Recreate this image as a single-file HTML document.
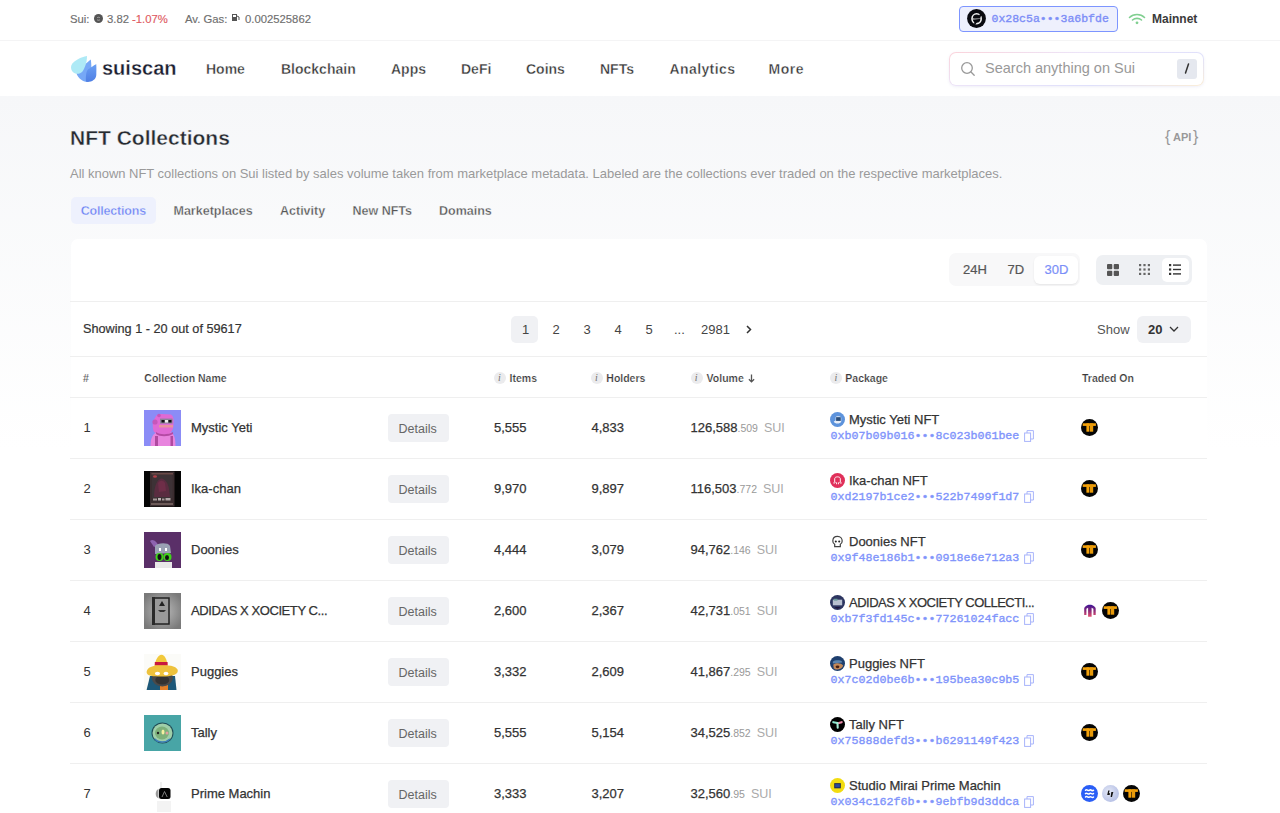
<!DOCTYPE html>
<html><head><meta charset="utf-8">
<style>
*{box-sizing:border-box;margin:0;padding:0}
html,body{width:1280px;height:813px;overflow:hidden;background:linear-gradient(to bottom,#f6f7f9 96px,#ffffff 450px);font-family:"Liberation Sans",sans-serif;color:#222}
.a{position:absolute}
.t{position:absolute;white-space:nowrap;line-height:1}
.nav{font-weight:bold;font-size:14px;color:#333;top:62px;-webkit-text-stroke:0.35px #fff}
.mono{font-family:"Liberation Mono",monospace}
.hl{position:absolute;left:70px;width:1137px;height:1px;background:#efefef}
.tab{font-weight:bold;font-size:12.5px;color:#555;top:205px;-webkit-text-stroke:0.3px #f8f9fa}
.th{font-weight:bold;font-size:10.5px;color:#3a3a3a;top:373px;-webkit-text-stroke:0.2px #fff}
.info{position:absolute;width:12px;height:12px;border-radius:6px;background:#ebebed;top:371.5px}
.info:after{content:"i";position:absolute;left:4px;top:1px;font-family:"Liberation Serif",serif;font-style:italic;font-size:10px;color:#707070;line-height:1}
.cell{font-size:13px;color:#333}
.nm{-webkit-text-stroke:0.25px #333}
.det{position:absolute;left:387.5px;width:61.5px;height:28.5px;background:#f0f1f4;border-radius:4px}
.det span{position:absolute;left:11px;top:9px;font-size:12.5px;color:#666;line-height:1}
.addr{font-family:"Liberation Mono",monospace;font-size:11.67px;color:#8094fb;-webkit-text-stroke:0.35px #8094fb}
.pg{font-size:13px;color:#444;top:323px}
</style></head><body>

<div class="a" style="left:0;top:0;width:1280px;height:40px;background:#fff"></div>
<div class="a" style="left:0;top:40px;width:1280px;height:1px;background:#f4f4f5"></div>
<div class="a" style="left:0;top:41px;width:1280px;height:55px;background:#fff"></div>
<div class="t" style="left:70px;top:13.7px;font-size:11.3px;color:#6f6f6f;-webkit-text-stroke:0.15px #6f6f6f">Sui:</div>
<svg class="a" style="left:94px;top:14px" width="9" height="9" viewBox="0 0 9 9"><circle cx="4.5" cy="4.5" r="4.5" fill="#555"/><path d="M3 4 C3.5 3 5.5 3 6 4 M3 5.5 C3.5 6.5 5.5 6.5 6 5.5" stroke="#bbb" stroke-width="0.8" fill="none"/></svg>
<div class="t" style="left:107px;top:13.7px;font-size:11.3px;color:#6f6f6f;-webkit-text-stroke:0.15px #6f6f6f">3.82</div>
<div class="t" style="left:132px;top:13.7px;font-size:11.3px;color:#e05a62;-webkit-text-stroke:0.15px #e05a62">-1.07%</div>
<div class="t" style="left:185px;top:13.7px;font-size:11.3px;color:#6f6f6f;-webkit-text-stroke:0.15px #6f6f6f">Av. Gas:</div>
<svg class="a" style="left:231px;top:13px" width="9" height="9" viewBox="0 0 9 9"><path d="M1 1 H6 V8 H1Z" fill="#555"/><rect x="2" y="2" width="3" height="2" fill="#fff"/><path d="M6 3 L8 4 V7" stroke="#555" stroke-width="1" fill="none"/></svg>
<div class="t" style="left:245px;top:13.7px;font-size:11.3px;color:#6f6f6f;-webkit-text-stroke:0.15px #6f6f6f">0.002525862</div>
<div class="a" style="left:959px;top:6px;width:159px;height:26px;border:1px solid #7d95ff;background:#eef0fd;border-radius:4px"></div>
<svg class="a" style="left:967px;top:9.3px" width="19" height="19" viewBox="0 0 19 19"><circle cx="9.5" cy="9.5" r="9.4" fill="#0a0a10"/><ellipse cx="9.6" cy="9.7" rx="4.6" ry="4.9" stroke="#f2f2f2" stroke-width="1.6" fill="none"/><path d="M13.4 4.6 L15 5.6 L8.6 15.2 L6.6 14.6Z" fill="#0a0a10"/><path d="M4.8 10.2 L14.6 9.2" stroke="#d0d0d0" stroke-width="1.2"/><path d="M6.5 9.6 L13.2 6.6 L13.2 9.4Z" fill="#0a0a10"/></svg>
<div class="t mono" style="left:991.5px;top:13px;font-size:11.5px;color:#7d8ef7;-webkit-text-stroke:0.35px #7d8ef7">0x28c5a•••3a6bfde</div>
<svg class="a" style="left:1128px;top:12px" width="18" height="13" viewBox="0 0 18 13"><path d="M1.5 5.5 C5.5 1.5 12.5 1.5 16.5 5.5" stroke="#80cf90" stroke-width="1.6" fill="none" stroke-linecap="round"/><path d="M4.5 8 C7 5.8 11 5.8 13.5 8" stroke="#80cf90" stroke-width="1.6" fill="none" stroke-linecap="round"/><circle cx="9" cy="10.8" r="1.4" fill="#80cf90"/></svg>
<div class="t" style="left:1152px;top:12.5px;font-size:12px;font-weight:bold;color:#3a3a3a">Mainnet</div>
<svg class="a" style="left:66px;top:52px" width="34" height="34" viewBox="0 0 34 34">
<defs><linearGradient id="lg2" x1="0" y1="0" x2="0" y2="1"><stop offset="0" stop-color="#6aa0f4"/><stop offset="1" stop-color="#4f7fe4"/></linearGradient></defs>
<path d="M24.8 7.5 C22 10 14 16 10.5 21.5 C11.5 25 15 28.5 19.5 29.8 C23 30 25.5 28 25.5 25 C25.5 19 25.5 12 24.8 7.5Z" fill="#76a8f6"/>
<path d="M30.2 12 C28 13.5 23 16.5 21.5 18 C20 20.5 19.5 26 20 29.8 C25 30.5 30 28 30.3 23 C30.4 19 30.5 15 30.2 12Z" fill="url(#lg2)"/>
<path d="M21 4 C15 5 8 8.5 5.5 13 C4 16.5 6 21.5 11 21.8 C13 21.9 15 21 16.5 19.5 C18 17 21 12 21 4Z" fill="#aeeaf6"/>
</svg>
<div class="t" style="left:102px;top:58px;font-size:20px;font-weight:bold;color:#1b2030;-webkit-text-stroke:0.3px #fff">suiscan</div>
<div class="t nav" style="left:206px">Home</div>
<div class="t nav" style="left:281px">Blockchain</div>
<div class="t nav" style="left:391px">Apps</div>
<div class="t nav" style="left:461px">DeFi</div>
<div class="t nav" style="left:526px">Coins</div>
<div class="t nav" style="left:600px">NFTs</div>
<div class="t nav" style="left:669.5px"><span style='letter-spacing:0.4px'>Analytics</span></div>
<div class="t nav" style="left:768.5px"><span style='letter-spacing:0.5px'>More</span></div>
<div class="a" style="left:948.5px;top:51.5px;width:255px;height:34.5px;border-radius:7px;background:linear-gradient(165deg,#fbd3da 0%,#ece4f8 35%,#dfe0fb 70%,#fbeed8 100%);padding:1px;box-shadow:0 1px 3px rgba(120,120,200,0.12)"><div style="width:100%;height:100%;background:#fff;border-radius:6px"></div></div>
<svg class="a" style="left:960px;top:61px" width="16" height="16" viewBox="0 0 16 16"><circle cx="7" cy="7" r="5.3" stroke="#999" stroke-width="1.3" fill="none"/><path d="M11 11 L14.2 14.2" stroke="#999" stroke-width="1.3" stroke-linecap="round"/></svg>
<div class="t" style="left:985px;top:61px;font-size:14.5px;color:#999">Search anything on Sui</div>
<div class="a" style="left:1177px;top:58.5px;width:20px;height:20.5px;border-radius:3px;background:#e5e8ef"></div>
<svg class="a" style="left:1183px;top:63px" width="8" height="11" viewBox="0 0 8 11"><path d="M5.5 1 L2.5 10" stroke="#333" stroke-width="1.5" stroke-linecap="round"/></svg>
<div class="t" style="left:70px;top:127.3px;font-size:21px;font-weight:bold;color:#262a30;-webkit-text-stroke:0.4px #f6f7f9">NFT Collections</div>
<div class="t" style="left:1165px;top:129px;font-size:16px;color:#999">{</div>
<div class="t" style="left:1173px;top:132px;font-size:11px;font-weight:bold;color:#999">API</div>
<div class="t" style="left:1193px;top:129px;font-size:16px;color:#999">}</div>
<div class="t" style="left:70px;top:167px;font-size:13px;color:#9a9a9a;letter-spacing:-0.02px">All known NFT collections on Sui listed by sales volume taken from marketplace metadata. Labeled are the collections ever traded on the respective marketplaces.</div>
<div class="a" style="left:71px;top:196.5px;width:85px;height:27.5px;background:#eef1fd;border-radius:5px"></div>
<div class="t tab" style="left:80.8px;color:#6b82f6;letter-spacing:-0.2px">Collections</div>
<div class="t tab" style="left:173.5px">Marketplaces</div>
<div class="t tab" style="left:280px">Activity</div>
<div class="t tab" style="left:352.5px">New NFTs</div>
<div class="t tab" style="left:439px">Domains</div>
<div class="a" style="left:70.5px;top:238.5px;width:1136.5px;height:620px;background:#fff;border-radius:7px"></div>
<div class="hl" style="top:301px"></div>
<div class="hl" style="top:356px"></div>
<div class="hl" style="top:397px"></div>
<div class="a" style="left:949px;top:253px;width:131px;height:33px;background:#f8f8f9;border-radius:7px"></div>
<div class="a" style="left:1034px;top:255.5px;width:44px;height:28px;background:#fff;border-radius:6px;box-shadow:0 1px 2px rgba(0,0,0,0.08)"></div>
<div class="t" style="left:963px;top:263px;font-size:13px;color:#555;-webkit-text-stroke:0.2px #555">24H</div>
<div class="t" style="left:1007.5px;top:263px;font-size:13px;color:#555;-webkit-text-stroke:0.2px #555">7D</div>
<div class="t" style="left:1044.5px;top:263px;font-size:13px;color:#7b8ff8;-webkit-text-stroke:0.2px #7b8ff8">30D</div>
<div class="a" style="left:1096px;top:254.5px;width:96px;height:30.5px;background:#eef0f3;border-radius:7px"></div>
<div class="a" style="left:1161.5px;top:257.5px;width:27.5px;height:24.5px;background:#fff;border-radius:5px"></div>
<svg class="a" style="left:1107px;top:264px" width="12" height="12" viewBox="0 0 12 12"><rect x="0" y="0" width="5.3" height="5.3" rx="1" fill="#555"/><rect x="6.7" y="0" width="5.3" height="5.3" rx="1" fill="#555"/><rect x="0" y="6.7" width="5.3" height="5.3" rx="1" fill="#555"/><rect x="6.7" y="6.7" width="5.3" height="5.3" rx="1" fill="#555"/></svg>
<svg class="a" style="left:1138.5px;top:264px" width="11" height="11" viewBox="0 0 11 11"><rect x="0" y="0" width="2.2" height="2.2" fill="#666"/><rect x="0" y="4.4" width="2.2" height="2.2" fill="#666"/><rect x="0" y="8.8" width="2.2" height="2.2" fill="#666"/><rect x="4.4" y="0" width="2.2" height="2.2" fill="#666"/><rect x="4.4" y="4.4" width="2.2" height="2.2" fill="#666"/><rect x="4.4" y="8.8" width="2.2" height="2.2" fill="#666"/><rect x="8.8" y="0" width="2.2" height="2.2" fill="#666"/><rect x="8.8" y="4.4" width="2.2" height="2.2" fill="#666"/><rect x="8.8" y="8.8" width="2.2" height="2.2" fill="#666"/></svg>
<svg class="a" style="left:1169px;top:264px" width="12" height="11" viewBox="0 0 12 11"><rect x="0" y="0" width="2.2" height="2.2" fill="#333"/><rect x="0" y="4.4" width="2.2" height="2.2" fill="#333"/><rect x="0" y="8.8" width="2.2" height="2.2" fill="#333"/><rect x="4" y="0.4" width="8" height="1.4" fill="#333"/><rect x="4" y="4.8" width="8" height="1.4" fill="#333"/><rect x="4" y="9.2" width="8" height="1.4" fill="#333"/></svg>
<div class="t" style="left:83px;top:323px;font-size:12.7px;color:#333;-webkit-text-stroke:0.2px #333">Showing 1 - 20 out of 59617</div>
<div class="a" style="left:511px;top:315.5px;width:27px;height:27px;background:#f0f1f4;border-radius:5px"></div>
<div class="t pg" style="left:521.9px">1</div>
<div class="t pg" style="left:552.6px">2</div>
<div class="t pg" style="left:583.4px">3</div>
<div class="t pg" style="left:614.4px">4</div>
<div class="t pg" style="left:645.6px">5</div>
<div class="t pg" style="left:674px">...</div>
<div class="t pg" style="left:701px">2981</div>
<svg class="a" style="left:746px;top:325px" width="6" height="9" viewBox="0 0 6 9"><path d="M1 1 L4.5 4.5 L1 8" stroke="#333" stroke-width="1.5" fill="none"/></svg>
<div class="t" style="left:1097px;top:323px;font-size:13px;color:#555">Show</div>
<div class="a" style="left:1136.5px;top:316px;width:54px;height:26.5px;background:#f0f1f4;border-radius:6px"></div>
<div class="t" style="left:1148px;top:323px;font-size:13px;font-weight:bold;color:#333">20</div>
<svg class="a" style="left:1168.5px;top:326px" width="10" height="6" viewBox="0 0 10 6"><path d="M1 1 L5 5 L9 1" stroke="#333" stroke-width="1.3" fill="none"/></svg>
<div class="t th" style="left:83px">#</div>
<div class="t th" style="left:144.3px">Collection Name</div>
<div class="info" style="left:494px"></div>
<div class="t th" style="left:509.6px">Items</div>
<div class="info" style="left:591px"></div>
<div class="t th" style="left:606.3px">Holders</div>
<div class="info" style="left:690.7px"></div>
<div class="t th" style="left:706.6px">Volume</div>
<div class="info" style="left:830.4px"></div>
<div class="t th" style="left:845.3px">Package</div>
<svg class="a" style="left:747.5px;top:373.5px" width="7" height="9" viewBox="0 0 7 9"><path d="M3.5 0.5 V7.8 M0.9 5.2 L3.5 7.9 L6.1 5.2" stroke="#555" stroke-width="1.3" fill="none"/></svg>
<div class="t th" style="left:1082px">Traded On</div>
<div class="t cell" style="left:83.5px;top:421.0px">1</div>
<div class="a" style="left:144px;top:410px;width:37px;height:36px;overflow:hidden"><svg width="37" height="36" viewBox="0 0 37 36"><rect width="37" height="36" fill="#8b8cf6"/>
<path d="M6.5 36 C6.5 28 9 23 14 22 L26 22 C30 23 31.5 28 31.5 36Z" fill="#e884de"/>
<path d="M10 22 C8 17 8.5 11 11 8 C12 5 14 4 17 4 L27 4.5 C29.5 6 30 10 29.5 14 C29.5 19 28 22.5 24 24 L14 24Z" fill="#e06ad4"/>
<circle cx="11" cy="12" r="2.6" fill="#c657ba"/><circle cx="15" cy="5.5" r="1.8" fill="#c657ba"/>
<rect x="16" y="8.6" width="12.5" height="5" fill="#8a8298"/>
<rect x="17.5" y="10" width="3" height="2.5" fill="#111"/><rect x="24.5" y="10" width="3" height="2.5" fill="#111"/><rect x="21" y="10" width="3" height="2.5" fill="#eee"/>
<rect x="15" y="15" width="14" height="2.5" fill="#e8929e"/>
<path d="M12 22 C16 25 24 25 29 22 L29 24 C24 27 16 27 12 24Z" fill="#b54aa5"/>
<rect x="11" y="26" width="3" height="10" fill="#b04aa0"/><rect x="26.5" y="26" width="2.5" height="10" fill="#b04aa0"/></svg></div>
<div class="t cell nm" style="left:191px;top:420.5px">Mystic Yeti</div>
<div class="det" style="top:413.5px"><span>Details</span></div>
<div class="t cell nm" style="left:494px;top:420.5px">5,555</div>
<div class="t cell nm" style="left:591.5px;top:420.5px">4,833</div>
<div class="t cell" style="left:690.5px;top:420.5px"><span class="nm">126,588</span><span style="font-size:10.5px;color:#999">.509</span><span style="font-size:12.5px;color:#aaa;margin-left:6px">SUI</span></div>
<div class="a" style="left:830px;top:411.5px;width:15px;height:15px"><svg width="15" height="15" viewBox="0 0 16 16"><circle cx="8" cy="8" r="8" fill="#5d93dc"/><path d="M4 10 C5 13 11 13 12 10 L12 6 C11 4 6 4 6 6 L6 9Z" fill="#e8eef8"/><rect x="6.5" y="5.5" width="5" height="4" fill="#2a4d7a"/></svg></div>
<div class="t cell nm" style="left:849px;top:413px">Mystic Yeti NFT</div>
<div class="t addr" style="left:830.5px;top:430.5px">0xb07b09b016•••8c023b061bee</div>
<svg class="a" style="left:1024px;top:429.5px" width="10" height="12" viewBox="0 0 10 12"><rect x="0.6" y="3" width="6" height="8.4" stroke="#a8b4fb" stroke-width="1" fill="none"/><path d="M3 3 V0.6 H9.4 V9 H6.6" stroke="#a8b4fb" stroke-width="1" fill="none"/></svg>
<div class="a" style="left:1081px;top:419px;width:17px;height:17px"><svg width="17" height="17" viewBox="0 0 17 17"><circle cx="8.5" cy="8.5" r="8.5" fill="#050505"/><rect x="1.7" y="4.3" width="13.2" height="2.6" fill="#f5a30c"/><rect x="5.4" y="4.3" width="3" height="8.4" fill="#f5a30c"/><rect x="9" y="4.3" width="3.2" height="8.4" fill="#e89a0a"/></svg></div>
<div class="hl" style="top:458px"></div>
<div class="t cell" style="left:83.5px;top:482.0px">2</div>
<div class="a" style="left:144px;top:471px;width:37px;height:36px;overflow:hidden"><svg width="37" height="36" viewBox="0 0 37 36"><rect width="37" height="36" fill="#050505"/>
<rect x="6" y="0.5" width="24.5" height="35" fill="#3a2c2f"/>
<rect x="7.5" y="2" width="21.5" height="1.5" fill="#6a4a48"/>
<rect x="8" y="4" width="20.5" height="23" fill="#3d3236"/>
<path d="M10 26 C10 18 12 10 16 8 C20 6 24 12 25 18 L26 26Z" fill="#5a2c40"/>
<path d="M14 12 C16 9 19 9 21 12 L22 20 L15 21Z" fill="#6e2e48"/>
<ellipse cx="11" cy="5.5" rx="2" ry="1.3" fill="#b04048"/>
<rect x="9" y="27.5" width="4" height="2" fill="#a49a9a"/><rect x="14" y="27" width="3" height="2.5" fill="#bcb2b2"/><rect x="18" y="27.5" width="2.5" height="2" fill="#a49a9a"/><rect x="21.5" y="27" width="5" height="2.5" fill="#b0a6a6"/>
<rect x="7" y="32" width="22" height="2" fill="#6d5a58"/></svg></div>
<div class="t cell nm" style="left:191px;top:481.5px">Ika-chan</div>
<div class="det" style="top:474.5px"><span>Details</span></div>
<div class="t cell nm" style="left:494px;top:481.5px">9,970</div>
<div class="t cell nm" style="left:591.5px;top:481.5px">9,897</div>
<div class="t cell" style="left:690.5px;top:481.5px"><span class="nm">116,503</span><span style="font-size:10.5px;color:#999">.772</span><span style="font-size:12.5px;color:#aaa;margin-left:6px">SUI</span></div>
<div class="a" style="left:830px;top:472.5px;width:15px;height:15px"><svg width="15" height="15" viewBox="0 0 16 16"><circle cx="8" cy="8" r="8" fill="#e0305a"/><path d="M5 10 L5 6 C5 3.5 11 3.5 11 6 L11 10 M3.5 10.5 C4.5 11.5 5.5 10 6 10 M10 10 C10.5 10 11.5 11.5 12.5 10.5 M7 10 L7 12 M9 10 L9 12" stroke="#fff" stroke-width="1" fill="none"/></svg></div>
<div class="t cell nm" style="left:849px;top:474px">Ika-chan NFT</div>
<div class="t addr" style="left:830.5px;top:491.5px">0xd2197b1ce2•••522b7499f1d7</div>
<svg class="a" style="left:1024px;top:490.5px" width="10" height="12" viewBox="0 0 10 12"><rect x="0.6" y="3" width="6" height="8.4" stroke="#a8b4fb" stroke-width="1" fill="none"/><path d="M3 3 V0.6 H9.4 V9 H6.6" stroke="#a8b4fb" stroke-width="1" fill="none"/></svg>
<div class="a" style="left:1081px;top:480px;width:17px;height:17px"><svg width="17" height="17" viewBox="0 0 17 17"><circle cx="8.5" cy="8.5" r="8.5" fill="#050505"/><rect x="1.7" y="4.3" width="13.2" height="2.6" fill="#f5a30c"/><rect x="5.4" y="4.3" width="3" height="8.4" fill="#f5a30c"/><rect x="9" y="4.3" width="3.2" height="8.4" fill="#e89a0a"/></svg></div>
<div class="hl" style="top:519px"></div>
<div class="t cell" style="left:83.5px;top:543.0px">3</div>
<div class="a" style="left:144px;top:532px;width:37px;height:36px;overflow:hidden"><svg width="37" height="36" viewBox="0 0 37 36"><rect width="37" height="36" fill="#5a2f68"/>
<path d="M6 9 C9 6 13 10 14 13 L10 15Z" fill="#8e63b0"/>
<path d="M11 14 C13 11 24 10 26 14 L27 21 L11 22Z" fill="#9aa0b4"/>
<rect x="15" y="16" width="2" height="3" fill="#fff"/><rect x="21" y="16" width="2" height="3" fill="#fff"/>
<ellipse cx="15.5" cy="25" rx="4" ry="4" fill="#3fd31a"/><ellipse cx="15.5" cy="25" rx="2" ry="3" fill="#111"/>
<ellipse cx="23.5" cy="25" rx="4" ry="4" fill="#3fd31a"/><ellipse cx="23" cy="25.5" rx="2" ry="2.5" fill="#111"/>
<rect x="11" y="30" width="17" height="6" fill="#e8e8e8"/></svg></div>
<div class="t cell nm" style="left:191px;top:542.5px">Doonies</div>
<div class="det" style="top:535.5px"><span>Details</span></div>
<div class="t cell nm" style="left:494px;top:542.5px">4,444</div>
<div class="t cell nm" style="left:591.5px;top:542.5px">3,079</div>
<div class="t cell" style="left:690.5px;top:542.5px"><span class="nm">94,762</span><span style="font-size:10.5px;color:#999">.146</span><span style="font-size:12.5px;color:#aaa;margin-left:6px">SUI</span></div>
<div class="a" style="left:830px;top:533.5px;width:15px;height:15px"><svg width="15" height="15" viewBox="0 0 16 16"><path d="M8 2.5 C4.5 2.5 3 5 3 7.5 C3 9.5 4 10.5 5 11 L5 13.5 L11 13.5 L11 11 C12 10.5 13 9.5 13 7.5 C13 5 11.5 2.5 8 2.5Z" fill="#fff" stroke="#444" stroke-width="1.3"/><circle cx="6.2" cy="8" r="1.1" fill="#222"/><circle cx="9.8" cy="8" r="1.1" fill="#222"/></svg></div>
<div class="t cell nm" style="left:849px;top:535px">Doonies NFT</div>
<div class="t addr" style="left:830.5px;top:552.5px">0x9f48e186b1•••0918e6e712a3</div>
<svg class="a" style="left:1024px;top:551.5px" width="10" height="12" viewBox="0 0 10 12"><rect x="0.6" y="3" width="6" height="8.4" stroke="#a8b4fb" stroke-width="1" fill="none"/><path d="M3 3 V0.6 H9.4 V9 H6.6" stroke="#a8b4fb" stroke-width="1" fill="none"/></svg>
<div class="a" style="left:1081px;top:541px;width:17px;height:17px"><svg width="17" height="17" viewBox="0 0 17 17"><circle cx="8.5" cy="8.5" r="8.5" fill="#050505"/><rect x="1.7" y="4.3" width="13.2" height="2.6" fill="#f5a30c"/><rect x="5.4" y="4.3" width="3" height="8.4" fill="#f5a30c"/><rect x="9" y="4.3" width="3.2" height="8.4" fill="#e89a0a"/></svg></div>
<div class="hl" style="top:580px"></div>
<div class="t cell" style="left:83.5px;top:604.0px">4</div>
<div class="a" style="left:144px;top:593px;width:37px;height:36px;overflow:hidden"><svg width="37" height="36" viewBox="0 0 37 36"><defs><radialGradient id="ag" cx="50%" cy="50%" r="60%"><stop offset="0" stop-color="#bdbdbd"/><stop offset="1" stop-color="#7a7a7a"/></radialGradient></defs><rect width="37" height="36" fill="url(#ag)"/>
<rect x="9" y="5" width="16" height="26" fill="#9a9a9a" stroke="#222" stroke-width="1.5"/>
<rect x="8" y="4" width="3" height="28" fill="#2a2a2a"/>
<path d="M15 13 L18 8 L21 13Z" fill="#222"/><path d="M14 17 L22 17 L20 19 L16 19Z" fill="#333"/></svg></div>
<div class="t cell nm" style="left:191px;top:603.5px"><span style='letter-spacing:-0.42px'>ADIDAS X XOCIETY C...</span></div>
<div class="det" style="top:596.5px"><span>Details</span></div>
<div class="t cell nm" style="left:494px;top:603.5px">2,600</div>
<div class="t cell nm" style="left:591.5px;top:603.5px">2,367</div>
<div class="t cell" style="left:690.5px;top:603.5px"><span class="nm">42,731</span><span style="font-size:10.5px;color:#999">.051</span><span style="font-size:12.5px;color:#aaa;margin-left:6px">SUI</span></div>
<div class="a" style="left:830px;top:594.5px;width:15px;height:15px"><svg width="15" height="15" viewBox="0 0 16 16"><circle cx="8" cy="8" r="8" fill="#2c3560"/><rect x="3" y="5" width="10" height="6" fill="#b8c0d0"/><rect x="4" y="4" width="4" height="2" fill="#6a9a9a"/><path d="M5 13 C7 15 9 15 11 13Z" fill="#1a0a30"/></svg></div>
<div class="t cell nm" style="left:849px;top:596px"><span style='letter-spacing:-0.5px'>ADIDAS X XOCIETY COLLECTI...</span></div>
<div class="t addr" style="left:830.5px;top:613.5px">0xb7f3fd145c•••77261024facc</div>
<svg class="a" style="left:1024px;top:612.5px" width="10" height="12" viewBox="0 0 10 12"><rect x="0.6" y="3" width="6" height="8.4" stroke="#a8b4fb" stroke-width="1" fill="none"/><path d="M3 3 V0.6 H9.4 V9 H6.6" stroke="#a8b4fb" stroke-width="1" fill="none"/></svg>
<div class="a" style="left:1081px;top:602px;width:17px;height:17px"><svg width="17" height="17" viewBox="0 0 17 17"><defs><linearGradient id="mg" x1="0" y1="0" x2="0" y2="1"><stop offset="0" stop-color="#3e1496"/><stop offset="0.5" stop-color="#8a2a78"/><stop offset="1" stop-color="#e4506e"/></linearGradient></defs><path d="M3.2 13 V6.4 C3.2 5.2 5 3.8 7.5 2.8 H10.2 C12.7 3.8 14.7 5.2 14.7 6.4 V13 H12.4 V6.8 L10.6 5.8 V14.8 H7.1 V5.8 L5.4 6.8 V13Z" fill="url(#mg)"/></svg></div>
<div class="a" style="left:1102px;top:602px;width:17px;height:17px"><svg width="17" height="17" viewBox="0 0 17 17"><circle cx="8.5" cy="8.5" r="8.5" fill="#050505"/><rect x="1.7" y="4.3" width="13.2" height="2.6" fill="#f5a30c"/><rect x="5.4" y="4.3" width="3" height="8.4" fill="#f5a30c"/><rect x="9" y="4.3" width="3.2" height="8.4" fill="#e89a0a"/></svg></div>
<div class="hl" style="top:641px"></div>
<div class="t cell" style="left:83.5px;top:665.0px">5</div>
<div class="a" style="left:144px;top:654px;width:37px;height:36px;overflow:hidden"><svg width="37" height="36" viewBox="0 0 37 36"><rect width="37" height="36" fill="#fbfbf8"/>
<path d="M2.6 36 L6 22 L31 22 L32.5 36Z" fill="#1d5878"/>
<rect x="16" y="31" width="8" height="5" fill="#e2802a"/>
<ellipse cx="18.3" cy="24" rx="10.5" ry="8.5" fill="#4a4a4a"/>
<ellipse cx="18.3" cy="26" rx="7" ry="4.5" fill="#333"/>
<path d="M2.6 18 C3 13 10 11 18 11 C27 11 34 13 33.8 17 C33.5 21 27 22.5 18 22.5 C9 22.5 2.5 22 2.6 18Z" fill="#eec23c"/>
<path d="M10.4 12 C11.5 6 14 0.7 17.5 0.7 C21 0.7 23 6 23.7 12Z" fill="#f2c93c"/>
<rect x="10.8" y="8" width="12.8" height="3.2" fill="#c8193f"/>
<ellipse cx="13.5" cy="19.5" rx="2.6" ry="1.7" fill="#fff"/><ellipse cx="22" cy="19.5" rx="2.4" ry="1.7" fill="#fff"/></svg></div>
<div class="t cell nm" style="left:191px;top:664.5px">Puggies</div>
<div class="det" style="top:657.5px"><span>Details</span></div>
<div class="t cell nm" style="left:494px;top:664.5px">3,332</div>
<div class="t cell nm" style="left:591.5px;top:664.5px">2,609</div>
<div class="t cell" style="left:690.5px;top:664.5px"><span class="nm">41,867</span><span style="font-size:10.5px;color:#999">.295</span><span style="font-size:12.5px;color:#aaa;margin-left:6px">SUI</span></div>
<div class="a" style="left:830px;top:655.5px;width:15px;height:15px"><svg width="15" height="15" viewBox="0 0 16 16"><circle cx="8" cy="8" r="8" fill="#1e3f6e"/><path d="M3 6 C5 4 11 4 13 6 L13 7 L3 8Z" fill="#5a85b0"/><path d="M3.5 9 C6 7 12 7 14 10 C13 14 6 16 4 13Z" fill="#c48a5a"/><ellipse cx="8" cy="11.5" rx="2" ry="1.5" fill="#4a2010"/></svg></div>
<div class="t cell nm" style="left:849px;top:657px">Puggies NFT</div>
<div class="t addr" style="left:830.5px;top:674.5px">0x7c02d0be6b•••195bea30c9b5</div>
<svg class="a" style="left:1024px;top:673.5px" width="10" height="12" viewBox="0 0 10 12"><rect x="0.6" y="3" width="6" height="8.4" stroke="#a8b4fb" stroke-width="1" fill="none"/><path d="M3 3 V0.6 H9.4 V9 H6.6" stroke="#a8b4fb" stroke-width="1" fill="none"/></svg>
<div class="a" style="left:1081px;top:663px;width:17px;height:17px"><svg width="17" height="17" viewBox="0 0 17 17"><circle cx="8.5" cy="8.5" r="8.5" fill="#050505"/><rect x="1.7" y="4.3" width="13.2" height="2.6" fill="#f5a30c"/><rect x="5.4" y="4.3" width="3" height="8.4" fill="#f5a30c"/><rect x="9" y="4.3" width="3.2" height="8.4" fill="#e89a0a"/></svg></div>
<div class="hl" style="top:702px"></div>
<div class="t cell" style="left:83.5px;top:726.0px">6</div>
<div class="a" style="left:144px;top:715px;width:37px;height:36px;overflow:hidden"><svg width="37" height="36" viewBox="0 0 37 36"><rect width="37" height="36" fill="#48a5a6"/>
<ellipse cx="18.5" cy="18" rx="11" ry="10.5" fill="#1f4b55"/>
<ellipse cx="18.5" cy="18" rx="10" ry="9.5" fill="#9fcfa9"/>
<ellipse cx="18" cy="18" rx="7" ry="6.5" fill="#7db07a"/>
<circle cx="14" cy="18" r="1.2" fill="#222"/><ellipse cx="19" cy="17" rx="1.5" ry="2.5" fill="#f3f0a0"/><ellipse cx="23" cy="18" rx="1.5" ry="1.5" fill="#e0a0a0"/>
<path d="M11 24 C14 28 22 28 26 24" stroke="#3a7fb8" stroke-width="1.5" fill="none"/></svg></div>
<div class="t cell nm" style="left:191px;top:725.5px">Tally</div>
<div class="det" style="top:718.5px"><span>Details</span></div>
<div class="t cell nm" style="left:494px;top:725.5px">5,555</div>
<div class="t cell nm" style="left:591.5px;top:725.5px">5,154</div>
<div class="t cell" style="left:690.5px;top:725.5px"><span class="nm">34,525</span><span style="font-size:10.5px;color:#999">.852</span><span style="font-size:12.5px;color:#aaa;margin-left:6px">SUI</span></div>
<div class="a" style="left:830px;top:716.5px;width:15px;height:15px"><svg width="15" height="15" viewBox="0 0 16 16"><circle cx="8" cy="8" r="8" fill="#000"/><path d="M3.5 5.5 L8 6.5" stroke="#8ee8d0" stroke-width="2.2" stroke-linecap="round"/><path d="M9.5 6.5 L12.5 5.5" stroke="#e88aa8" stroke-width="2.2" stroke-linecap="round"/><path d="M8 6.5 L8.2 11.5" stroke="#a8f0d8" stroke-width="2.2" stroke-linecap="round"/></svg></div>
<div class="t cell nm" style="left:849px;top:718px">Tally NFT</div>
<div class="t addr" style="left:830.5px;top:735.5px">0x75888defd3•••b6291149f423</div>
<svg class="a" style="left:1024px;top:734.5px" width="10" height="12" viewBox="0 0 10 12"><rect x="0.6" y="3" width="6" height="8.4" stroke="#a8b4fb" stroke-width="1" fill="none"/><path d="M3 3 V0.6 H9.4 V9 H6.6" stroke="#a8b4fb" stroke-width="1" fill="none"/></svg>
<div class="a" style="left:1081px;top:724px;width:17px;height:17px"><svg width="17" height="17" viewBox="0 0 17 17"><circle cx="8.5" cy="8.5" r="8.5" fill="#050505"/><rect x="1.7" y="4.3" width="13.2" height="2.6" fill="#f5a30c"/><rect x="5.4" y="4.3" width="3" height="8.4" fill="#f5a30c"/><rect x="9" y="4.3" width="3.2" height="8.4" fill="#e89a0a"/></svg></div>
<div class="hl" style="top:763px"></div>
<div class="t cell" style="left:83.5px;top:787.0px">7</div>
<div class="a" style="left:144px;top:776px;width:37px;height:36px;overflow:hidden"><svg width="37" height="36" viewBox="0 0 37 36"><rect width="37" height="36" fill="#fff"/>
<rect x="16.5" y="6" width="1" height="6" fill="#e2e2e2"/>
<path d="M14.5 13 C11 14.5 10.5 20.5 14.5 22.5Z" fill="#9a9a9a"/>
<rect x="15" y="12" width="11.5" height="11" rx="2.5" fill="#050505"/>
<path d="M18 21 L20.5 15.5 L23.2 21" stroke="#999" stroke-width="0.8" fill="none"/>
<rect x="13" y="25" width="14" height="11" fill="#f3f3f3"/></svg></div>
<div class="t cell nm" style="left:191px;top:786.5px">Prime Machin</div>
<div class="det" style="top:779.5px"><span>Details</span></div>
<div class="t cell nm" style="left:494px;top:786.5px">3,333</div>
<div class="t cell nm" style="left:591.5px;top:786.5px">3,207</div>
<div class="t cell" style="left:690.5px;top:786.5px"><span class="nm">32,560</span><span style="font-size:10.5px;color:#999">.95</span><span style="font-size:12.5px;color:#aaa;margin-left:6px">SUI</span></div>
<div class="a" style="left:830px;top:777.5px;width:15px;height:15px"><svg width="15" height="15" viewBox="0 0 16 16"><circle cx="8" cy="8" r="8" fill="#f2dc10"/><rect x="4.5" y="5.5" width="7" height="5.5" fill="#1a2250"/><rect x="5.5" y="6.5" width="5" height="3.5" fill="#2a4a9a"/></svg></div>
<div class="t cell nm" style="left:849px;top:779px">Studio Mirai Prime Machin</div>
<div class="t addr" style="left:830.5px;top:796.5px">0x034c162f6b•••9ebfb9d3ddca</div>
<svg class="a" style="left:1024px;top:795.5px" width="10" height="12" viewBox="0 0 10 12"><rect x="0.6" y="3" width="6" height="8.4" stroke="#a8b4fb" stroke-width="1" fill="none"/><path d="M3 3 V0.6 H9.4 V9 H6.6" stroke="#a8b4fb" stroke-width="1" fill="none"/></svg>
<div class="a" style="left:1081px;top:785px;width:17px;height:17px"><svg width="17" height="17" viewBox="0 0 17 17"><circle cx="8.5" cy="8.5" r="8.5" fill="#2a5ef6"/><path d="M4.5 5.2 C6 3.6 7 6.6 8.5 5.2 C10 3.8 11 6.8 12.5 5.2 M4.5 8.6 C6 7 7 10 8.5 8.6 C10 7.2 11 10.2 12.5 8.6 M4.5 12 C6 10.4 7 13.4 8.5 12 C10 10.6 11 13.6 12.5 12" stroke="#fff" stroke-width="1.5" fill="none" stroke-linecap="round"/></svg></div>
<div class="a" style="left:1102px;top:785px;width:17px;height:17px"><svg width="17" height="17" viewBox="0 0 17 17"><defs><radialGradient id="gg" cx="40%" cy="40%" r="60%"><stop offset="0" stop-color="#e4e8f6"/><stop offset="1" stop-color="#b8c2e6"/></radialGradient></defs><circle cx="8.5" cy="8.5" r="8.5" fill="url(#gg)"/><path d="M6.2 5.5 L7.6 5.5 L6.9 8.2 L8.2 8.2 L7.6 10 L5.2 10Z" fill="#111"/><path d="M9.3 7 L11.3 7 L10 12 L8.6 12Z" fill="#111"/></svg></div>
<div class="a" style="left:1123px;top:785px;width:17px;height:17px"><svg width="17" height="17" viewBox="0 0 17 17"><circle cx="8.5" cy="8.5" r="8.5" fill="#050505"/><rect x="1.7" y="4.3" width="13.2" height="2.6" fill="#f5a30c"/><rect x="5.4" y="4.3" width="3" height="8.4" fill="#f5a30c"/><rect x="9" y="4.3" width="3.2" height="8.4" fill="#e89a0a"/></svg></div>
</body></html>
